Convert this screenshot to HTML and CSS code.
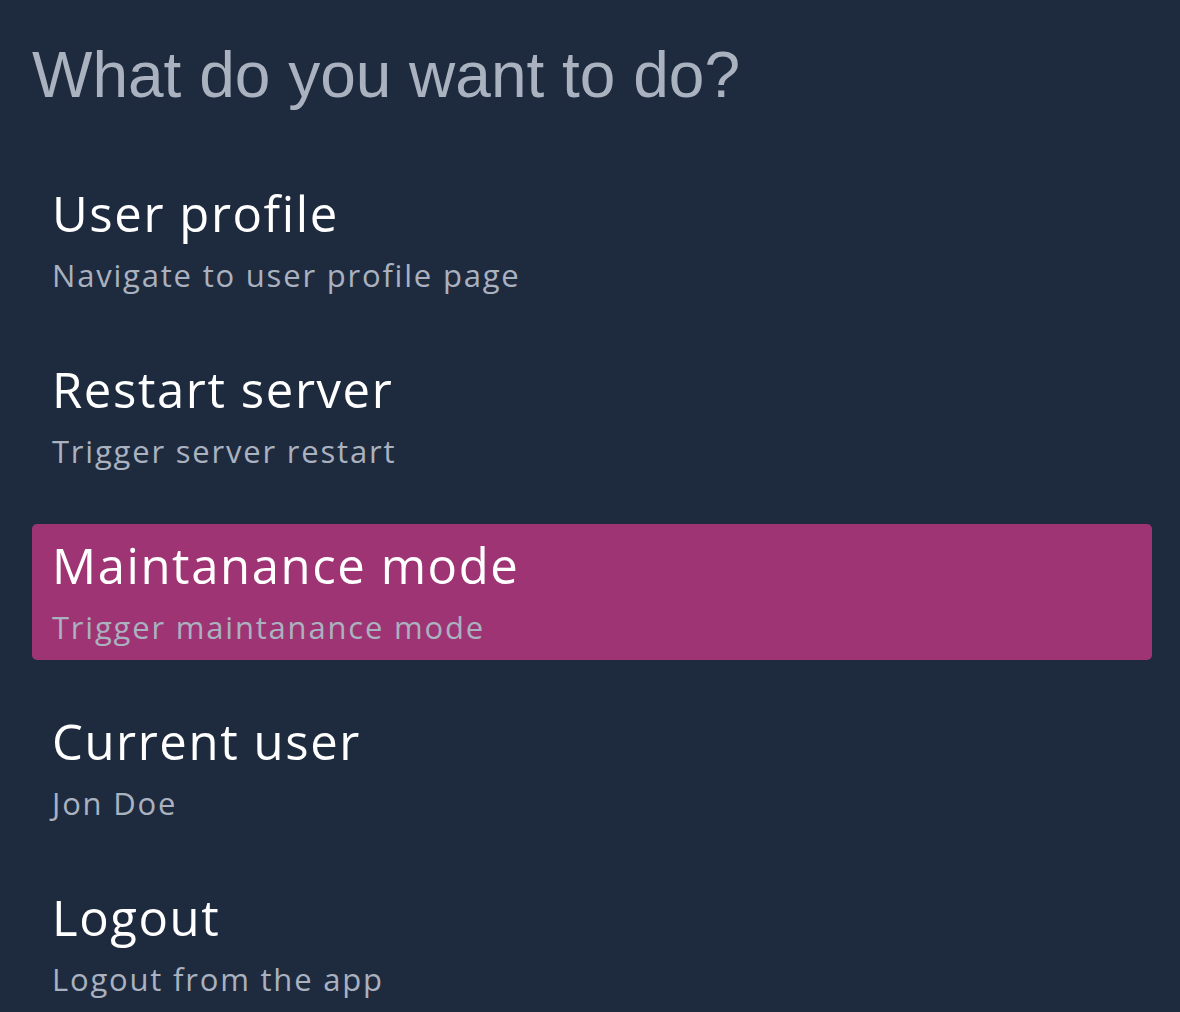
FILE: index.html
```html
<!DOCTYPE html>
<html>
<head>
<meta charset="utf-8">
<link rel="stylesheet" href="styles.css">
</head>
<body>
<main class="page">
  <h1 class="heading">What do you want to do?</h1>
  <ul class="menu">
    <li class="item">
      <div class="title">User profile</div>
      <div class="desc">Navigate to user profile page</div>
    </li>
    <li class="item">
      <div class="title">Restart server</div>
      <div class="desc">Trigger server restart</div>
    </li>
    <li class="item active">
      <div class="title">Maintanance mode</div>
      <div class="desc">Trigger maintanance mode</div>
    </li>
    <li class="item">
      <div class="title">Current user</div>
      <div class="desc">Jon Doe</div>
    </li>
    <li class="item">
      <div class="title">Logout</div>
      <div class="desc">Logout from the app</div>
    </li>
  </ul>
</main>
</body>
</html>
```
FILE: styles.css
```css
html, body {
  margin: 0;
  padding: 0;
  background: #1e2b3f;
}
.page {
  padding: 39px 28px 0 32px;
}
.heading {
  margin: 0 0 61px 0;
  font-family: "Liberation Sans", Arial, sans-serif;
  font-weight: 400;
  font-size: 64px;
  line-height: 72px;
  color: #aab1bf;
}
.menu {
  list-style: none;
  margin: 0;
  padding: 0;
  display: flex;
  flex-direction: column;
  gap: 40px;
}
.item {
  padding: 10px 20px 2px;
  border-radius: 5px;
  font-family: "Open Sans", "Noto Sans", sans-serif;
}
.item.active {
  background: #9f3474;
}
.title {
  font-size: 49px;
  line-height: 62px;
  letter-spacing: 1.6px;
  color: #ffffff;
}
.desc {
  font-size: 31px;
  line-height: 62px;
  letter-spacing: 1.8px;
  color: #aab1bf;
}
```
